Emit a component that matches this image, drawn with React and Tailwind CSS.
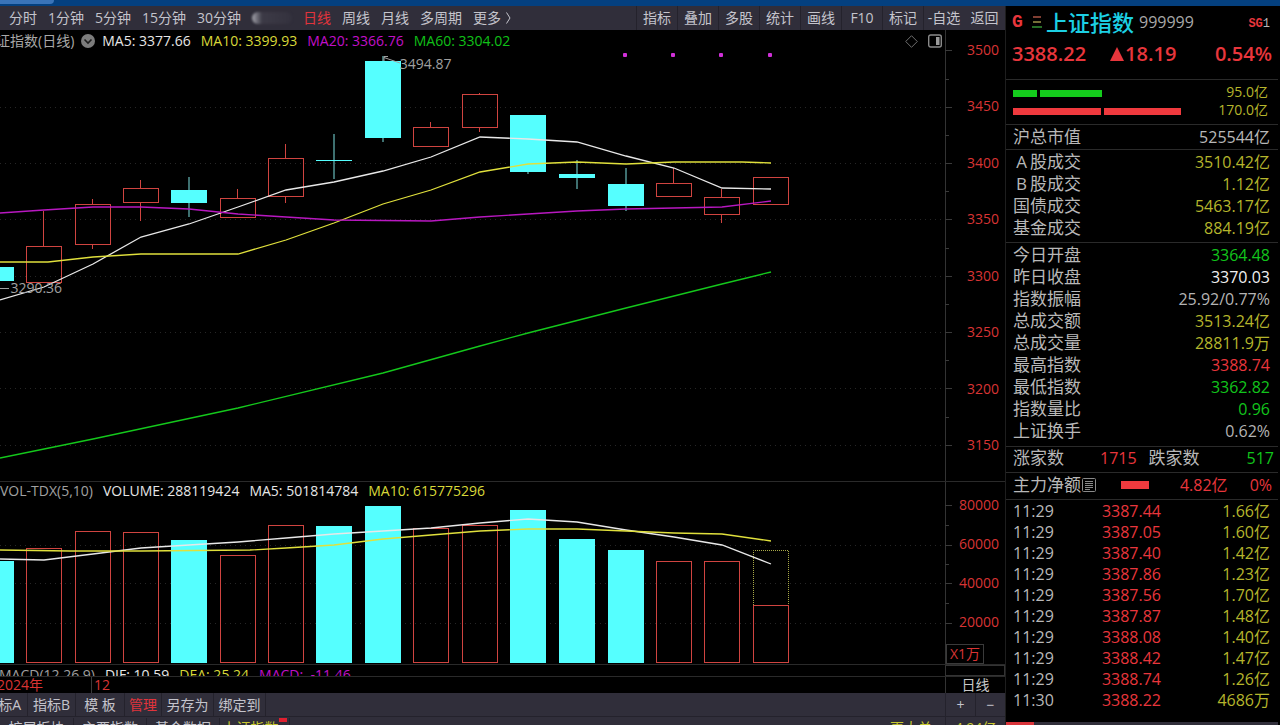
import React, { useState } from "react";
import clsx from "clsx";

const periods = ["分时", "1分钟", "5分钟", "15分钟", "30分钟"];
const longPeriods = ["日线", "周线", "月线", "多周期"];
const tools = ["指标", "叠加", "多股", "统计", "画线", "F10", "标记", "-自选", "返回"];

// x, kind, high, body top, body bottom, low, volume top
const candles = [
  [-5, "down", 267, 267, 281, 281, 561],
  [43, "up", 211, 246, 282, 282, 548],
  [92, "up", 199, 204, 244, 249, 531],
  [140, "up", 180, 188, 202, 221, 532],
  [188, "down", 177, 190, 203, 217, 540],
  [237, "up", 189, 198, 217, 217, 555],
  [285, "up", 144, 158, 196, 203, 525],
  [333, "down", 134, 160, 161, 179, 526],
  [382, "down", 56, 61, 138, 142, 506],
  [430, "up", 122, 127, 146, 146, 528],
  [479, "up", 93, 94, 127, 132, 525],
  [527, "down", 115, 115, 172, 174, 510],
  [576, "down", 160, 174, 178, 189, 539],
  [625, "down", 168, 184, 206, 211, 550],
  [673, "up", 168, 183, 196, 196, 561],
  [721, "up", 189, 197, 214, 223, 561],
  [770, "up", 177, 177, 204, 204, 605],
];

const priceLines = [
  ["#e8e8e8", "0,300 44,287 93,264 141,237 189,224 238,207 286,190 334,182 383,171 431,157 480,137 528,139 577,142 626,156 674,168 722,188 771,189"],
  ["#e0e03c", "0,262 48,262 93,257 141,254 238,254 286,240 334,223 383,204 431,190 480,172 528,164 577,162 626,164 674,162 742,162 771,163"],
  ["#b818c0", "0,213 44,210 93,207 141,207 189,209 238,214 286,217 334,220 431,221 480,217 528,214 577,211 626,209 674,208 722,207 771,201"],
  ["#14c81c", "0,458 93,439 238,408 383,373 480,346 528,333 626,308 674,296 722,284 771,272"],
];

const volumeLines = [
  ["#e8e8e8", "0,559 44,560 93,554 141,548 189,545 238,542 286,538 334,534 383,531 431,528 480,523 528,519 577,522 626,530 674,537 722,545 771,564"],
  ["#e0e03c", "0,550 70,551 141,551 250,550 286,548 334,545 383,539 431,535 480,531 528,529 577,529 626,531 674,533 722,534 771,541"],
];

const turnover = [
  ["A股成交", "3510.42亿"],
  ["B股成交", "1.12亿"],
  ["国债成交", "5463.17亿"],
  ["基金成交", "884.19亿"],
];

const stats = [
  ["今日开盘", "3364.48", "text-[#12c41c]"],
  ["昨日收盘", "3370.03", "text-[#f0f0f0]"],
  ["指数振幅", "25.92/0.77%", "text-[#b4b4b4]"],
  ["总成交额", "3513.24亿", "text-[#b5b52c]"],
  ["总成交量", "28811.9万", "text-[#b5b52c]"],
  ["最高指数", "3388.74", "text-[#e8363c]"],
  ["最低指数", "3362.82", "text-[#12c41c]"],
  ["指数量比", "0.96", "text-[#12c41c]"],
  ["上证换手", "0.62%", "text-[#b4b4b4]"],
];

const ticks = [
  ["11:29", "3387.44", "1.66亿"],
  ["11:29", "3387.05", "1.60亿"],
  ["11:29", "3387.40", "1.42亿"],
  ["11:29", "3387.86", "1.23亿"],
  ["11:29", "3387.56", "1.70亿"],
  ["11:29", "3387.87", "1.48亿"],
  ["11:29", "3388.08", "1.40亿"],
  ["11:29", "3388.42", "1.47亿"],
  ["11:29", "3388.74", "1.26亿"],
  ["11:30", "3388.22", "4686万"],
];

const Toolbar = () => {
  const [active, setActive] = useState("日线");

  return (
    <nav className="flex h-6 shrink-0 items-center justify-between bg-[#302e3a] text-[#c4c4cc]">
      <div className="flex items-center gap-[11px] pl-[9px]">
        {periods.map((p) => (
          <button key={p} type="button" onClick={() => setActive(p)} className="whitespace-nowrap">
            {p}
          </button>
        ))}
        <div className="h-3 w-10 rounded-full bg-linear-to-r from-[#a8a8b0] via-[#3c3a46] via-25% to-[#34323e] blur-[1px]" />
        {longPeriods.map((p) => (
          <button
            key={p}
            type="button"
            onClick={() => setActive(p)}
            className={clsx("whitespace-nowrap", p === active && "text-[#e0343c]")}
          >
            {p}
          </button>
        ))}
        <button type="button" className="flex items-center gap-1 whitespace-nowrap">
          更多
          <svg width="7" height="12" viewBox="0 0 7 12" fill="none" stroke="currentColor">
            <path d="M1.5 .5 5 6 1.5 11.5" />
          </svg>
        </button>
      </div>
      <div className="flex h-full">
        {tools.map((t, i) => (
          <button
            key={t}
            type="button"
            className={clsx("w-[41px] whitespace-nowrap text-center", i < 8 && "border-l border-[#24222c]")}
          >
            {t}
          </button>
        ))}
      </div>
    </nav>
  );
};

const Grid = ({ rows }) =>
  rows.map((y) => (
    <line key={y} x1="0" x2="945" y1={y + 0.5} y2={y + 0.5} stroke="#262626" strokeDasharray="1 4" />
  ));

const Ticks = ({ top, height, rows }) => (
  <svg className="h-full w-[7px] shrink-0" viewBox={`0 ${top} 7 ${height}`} preserveAspectRatio="none">
    <path d={`M.5 ${top}V${top + height}`} stroke="#333" />
    {rows.map((y, i) => (
      <path key={y} d={`M0 ${y + 0.5}H${i % 2 ? 4 : 7}`} stroke="#3a3a3a" />
    ))}
  </svg>
);

const PriceChart = () => (
  <section className="flex min-h-0 flex-1">
    <div className="flex min-w-0 flex-1 flex-col">
      <div className="flex h-5 shrink-0 items-center gap-[10px] overflow-hidden whitespace-nowrap pt-[2px]">
        <span className="-ml-[18px] text-[#a8a8a8]">上证指数(日线)</span>
        <svg className="-mx-[3px] shrink-0" width="14" height="14" viewBox="0 0 14 14">
          <circle cx="7" cy="7" r="7" fill="#7c7c7c" />
          <path d="m3.5 5.5 3.5 3.5 3.5-3.5" fill="none" stroke="#1c1c1c" strokeWidth="1.6" />
        </svg>
        <span className="text-[#e6e6e6]">MA5: 3377.66</span>
        <span className="text-[#d8d838]">MA10: 3399.93</span>
        <span className="text-[#c010c8]">MA20: 3366.76</span>
        <span className="text-[#10c018]">MA60: 3304.02</span>
        <svg className="ml-auto shrink-0" width="13" height="13" viewBox="0 0 13 13" fill="none" stroke="#6e6e6e">
          <path d="M6.5 .7 12.3 6.5 6.5 12.3 .7 6.5Z" />
        </svg>
        <svg className="mr-[3px] shrink-0" width="14" height="14" viewBox="0 0 14 14">
          <rect x=".7" y="1" width="12.6" height="12" rx="2" fill="none" stroke="#8a8a8a" strokeWidth="1.4" />
          <rect x="8" y="3" width="3.5" height="8" fill="#9a9a9a" />
        </svg>
      </div>
      <div className="relative min-h-0 flex-1">
        <svg className="absolute inset-0 h-full w-full" viewBox="0 50 945 431" preserveAspectRatio="none">
          <Grid rows={[107, 163, 219, 276, 332, 388, 445]} />
          <g fill="#d030d8">
            <rect x="623" y="53" width="4" height="4" rx="1" />
            <rect x="671" y="53" width="4" height="4" rx="1" />
            <rect x="719" y="53" width="4" height="4" rx="1" />
            <rect x="768" y="53" width="4" height="4" rx="1" />
          </g>
          {candles.map(([x, kind, high, top, bottom, low]) =>
            kind === "down" ? (
              <g key={x}>
                <path d={`M${x + 1} ${high}V${low}`} stroke="#7ce0e0" />
                <rect x={x - 17} y={top} width="36" height={bottom - top} fill="#55ffff" />
              </g>
            ) : (
              <g key={x} fill="none" stroke="#d04440">
                <path d={`M${x + 0.5} ${high}V${top}M${x + 0.5} ${bottom}V${low}`} />
                <rect x={x - 16.5} y={top + 0.5} width="35" height={bottom - top} />
              </g>
            )
          )}
          {priceLines.map(([color, points]) => (
            <polyline key={color} points={points} fill="none" stroke={color} strokeWidth="1.3" />
          ))}
          <path d="M388 56.500H384V61M384 57.500 400 63M0 288.500H9" fill="none" stroke="#a0a0a0" />
        </svg>
        <span className="absolute left-[42.300%] top-[1.400%] leading-4 text-[#a0a0a0]">3494.87</span>
        <span className="absolute left-[1.100%] top-[53.400%] leading-4 text-[#a0a0a0]">3290.36</span>
      </div>
    </div>
    <div className="flex w-[60px] shrink-0">
      <Ticks
        top={30}
        height={451}
        rows={[50, 79, 107, 135, 163, 191, 219, 248, 276, 304, 332, 360, 388, 417, 445]}
      />
      <div className="flex flex-1 flex-col items-end justify-between pb-7 pr-[6px] pt-3 leading-4 text-[#d83434]">
        {[3500, 3450, 3400, 3350, 3300, 3250, 3200, 3150].map((v) => (
          <span key={v}>{v}</span>
        ))}
      </div>
    </div>
  </section>
);

const VolumeChart = () => (
  <section className="flex h-[184px] shrink-0 border-y border-[#2a2a2a]">
    <div className="flex min-w-0 flex-1 flex-col">
      <div className="flex h-[18px] shrink-0 items-center gap-[10px] whitespace-nowrap">
        <span className="text-[#a0a0a0]">VOL-TDX(5,10)</span>
        <span className="text-[#e6e6e6]">VOLUME: 288119424</span>
        <span className="text-[#e6e6e6]">MA5: 501814784</span>
        <span className="text-[#d8d838]">MA10: 615775296</span>
      </div>
      <div className="relative min-h-0 flex-1">
        <svg className="absolute inset-0 h-full w-full" viewBox="0 500 945 164" preserveAspectRatio="none">
          <Grid rows={[545, 583, 623]} />
          {candles.map(([x, kind, , , , , top]) =>
            kind === "down" ? (
              <rect key={x} x={x - 17} y={top} width="36" height={663 - top} fill="#55ffff" />
            ) : (
              <rect
                key={x}
                x={x - 16.5}
                y={top + 0.5}
                width="35"
                height={662 - top}
                fill="none"
                stroke="#d04440"
              />
            )
          )}
          <path d="M753.500 605V550.500H788.500V605" fill="none" stroke="#a8a848" strokeDasharray="1 1" />
          {volumeLines.map(([color, points]) => (
            <polyline key={color} points={points} fill="none" stroke={color} strokeWidth="1.3" />
          ))}
        </svg>
      </div>
    </div>
    <div className="flex w-[60px] shrink-0">
      <Ticks top={482} height={182} rows={[505, 525, 545, 564, 583, 603, 623]} />
      <div className="flex flex-1 flex-col pt-[15px] leading-4 text-[#d83434]">
        <div className="flex flex-col gap-[23px] pr-[6px] text-right">
          {[80000, 60000, 40000, 20000].map((v) => (
            <span key={v}>{v}</span>
          ))}
        </div>
        <span className="-ml-[6px] mt-auto w-[38px] whitespace-nowrap border border-[#3a3a3a] text-center leading-[18px]">
          X1万
        </span>
      </div>
    </div>
  </section>
);

const BottomBars = () => (
  <footer className="shrink-0">
    <div className="flex h-[11px]">
      <div className="flex flex-1 items-start gap-[10px] overflow-hidden whitespace-nowrap pt-[2px]">
        <span className="-ml-px text-[#a0a0a0]">MACD(12,26,9)</span>
        <span className="text-[#e6e6e6]">DIF: 10.59</span>
        <span className="text-[#d8d838]">DEA: 25.24</span>
        <span className="whitespace-pre text-[#c010c8]">MACD:  -11.46</span>
      </div>
      <div className="w-[60px] border border-[#333]" />
    </div>
    <div className="flex h-[17px] border-t border-[#2a2a2a] leading-4">
      <div className="flex flex-1 text-[#d83434]">
        <span className="-ml-[3px] w-[94px]">2024年</span>
        <span className="border-l border-[#3a3a3a] pl-[2px]">12</span>
      </div>
      <span className="w-[60px] border-l border-[#333] text-center text-[#c8c8c8]">日线</span>
    </div>
    <div className="flex h-6 border-b border-[#24222c] bg-[#302e3a] text-[#c4c4cc]">
      <button type="button" className="flex w-[27px] items-center justify-end overflow-hidden whitespace-nowrap pr-[6px]">
        指标A
      </button>
      <button type="button" className="w-12 border-l border-[#24222c]">指标B</button>
      <button type="button" className="w-[50px] border-x border-[#24222c]">模 板</button>
      <button type="button" className="w-9 text-[#e0343c]">管理</button>
      <button type="button" className="w-[52px] border-l border-[#24222c]">另存为</button>
      <button type="button" className="w-[53px] border-x border-[#24222c]">绑定到</button>
      <button type="button" className="ml-auto w-[30px] border-l border-[#24222c]">+</button>
      <button type="button" className="w-[30px] border-l border-[#24222c]">−</button>
    </div>
    <div className="flex h-2 items-start overflow-hidden bg-[#302e3a] leading-5 text-[#c4c4cc]">
      <div className="flex flex-1 whitespace-nowrap pt-px">
        <a href="#sector" className="w-[74px] border-r border-[#24222c] text-center">扩展板块</a>
        <a href="#hk" className="w-[73px] border-r border-[#24222c] text-center">主要指数</a>
        <a href="#fund" className="w-[73px] border-r border-[#24222c] text-center">基金数据</a>
        <a href="#index" className="flex w-[70px] justify-center border-r border-[#24222c] text-[#c8c830]">
          上证指数
          <span className="h-1 w-2 bg-[#e02030]" />
        </a>
      </div>
      <span className="w-[55px] pt-px text-[#c8c830]">更大单</span>
      <span className="w-[60px] border-l border-[#24222c] pt-px text-center text-[#c8c830]">4.94亿</span>
    </div>
  </footer>
);

const Label = ({ text }) =>
  /^[AB]/.test(text) ? (
    <dt className="text-[17px] text-[#b8b8b8]">
      <span className="inline-block w-[17px] text-center">{text[0]}</span>
      {text.slice(1)}
    </dt>
  ) : (
    <dt className="text-[17px] text-[#b8b8b8]">{text}</dt>
  );

const QuotePanel = () => (
  <aside className="flex w-[275px] shrink-0 flex-col border-l border-[#1e1e1e] bg-black pr-[2px] text-base leading-[22px] text-[#b8b8b8]">
    <header className="h-[73px] px-[6px]">
      <div className="flex h-8 items-center pb-px">
        <b className="w-5 font-mono text-lg font-semibold text-[#e8363c]">G</b>
        <svg width="10" height="12" viewBox="0 0 10 12" strokeWidth="1.4">
          <path d="M1 1H9" stroke="#b85a48" />
          <path d="M1 6H9" stroke="#a8a050" />
          <path d="M0 11H10" stroke="#38a038" />
        </svg>
        <h1 className="ml-1 text-[22px] font-medium text-[#1cd0e4]">上证指数</h1>
        <span className="ml-[5px] text-[#a8a8a8]">999999</span>
        <span className="ml-auto mr-[2px] pt-1 font-mono text-xs">
          <b className="text-[#e8363c]">SG</b>1
        </span>
      </div>
      <div className="flex h-8 items-center text-xl font-semibold text-[#e8363c]">
        <span>3388.22</span>
        <span className="ml-6 flex items-center gap-px">
          <svg width="14" height="14" viewBox="0 0 14 14" fill="currentColor">
            <path d="M7 0 14 14H0Z" />
          </svg>
          18.19
        </span>
        <span className="ml-auto">0.54%</span>
      </div>
    </header>

    <section className="flex h-[45px] items-center justify-between border-t border-[#2a2a2a] pl-[7px] pr-[10px]">
      <div className="flex flex-col gap-[11px]">
        <div className="flex gap-[3px]">
          <div className="h-[7px] w-6 bg-[#14cc1c]" />
          <div className="h-[7px] w-[62px] bg-[#14cc1c]" />
        </div>
        <div className="flex gap-[3px]">
          <div className="h-[7px] w-[88px] bg-[#f03a3e]" />
          <div className="h-[7px] w-[77px] bg-[#f03a3e]" />
        </div>
      </div>
      <div className="flex flex-col pb-[2px] text-right text-sm leading-[18px] text-[#b5b52c]">
        <span>95.0亿</span>
        <span>170.0亿</span>
      </div>
    </section>

    <dl className="flex h-[25px] items-center justify-between border-t border-[#2a2a2a] pb-px pl-[7px] pr-2">
      <Label text="沪总市值" />
      <dd>525544亿</dd>
    </dl>

    <dl className="border-t border-[#2a2a2a] pb-[3px] pl-[7px] pr-2 pt-px">
      {turnover.map(([label, value]) => (
        <div key={label} className="flex h-[22px] items-center justify-between">
          <Label text={label} />
          <dd className="text-[#b5b52c]">{value}</dd>
        </div>
      ))}
    </dl>

    <dl className="border-t border-[#2a2a2a] pb-1 pl-[7px] pr-2 pt-px">
      {stats.map(([label, value, color]) => (
        <div key={label} className="flex h-[22px] items-center justify-between">
          <Label text={label} />
          <dd className={color}>{value}</dd>
        </div>
      ))}
    </dl>

    <dl className="flex h-[26px] items-center border-t border-[#2a2a2a] pb-[3px] pl-[7px] pr-1">
      <Label text="涨家数" />
      <dd className="ml-9 text-[#e8363c]">1715</dd>
      <dt className="ml-3 text-[17px]">跌家数</dt>
      <dd className="ml-auto text-[#12c41c]">517</dd>
    </dl>

    <div className="flex h-[27px] items-center border-t border-[#2a2a2a] pb-[2px] pl-[7px] pr-[6px] text-[#e8363c]">
      <span className="text-[17px] text-[#b8b8b8]">主力净额</span>
      <svg className="ml-px" width="14" height="14" viewBox="0 0 14 14" fill="none" stroke="#8a8a8a">
        <rect x=".5" y=".5" width="13" height="13" rx="1" />
        <path d="M3 3.500H11M3 5.500H11M3 7.500H11M3 9.500H11M3 11.500H8" />
      </svg>
      <div className="ml-[25px] h-2 w-7 bg-[#f03a3e]" />
      <span className="ml-auto">4.82亿</span>
      <span className="ml-[22px]">0%</span>
    </div>

    <div className="flex-1 border-t border-[#2a2a2a] pl-[7px] pr-2 pt-px">
      <table className="w-full table-fixed leading-[21px]">
        <tbody>
          {ticks.map(([time, price, amount]) => (
            <tr key={price}>
              <td className="w-[70px] p-0">{time}</td>
              <td className="w-[78px] p-0 text-right text-[#e8363c]">{price}</td>
              <td className="p-0 text-right text-[#b5b52c]">{amount}</td>
            </tr>
          ))}
        </tbody>
      </table>
    </div>
    <div className="h-[3px] bg-[#302e3a]">
      <div className="h-full w-7 bg-[#d8343a]" />
    </div>
  </aside>
);

const App = () => (
  <div className="flex h-screen flex-col overflow-hidden bg-black font-['Open_Sans','Noto_Sans_CJK_SC',sans-serif] text-sm leading-4">
    <div className="h-[6px] shrink-0 bg-[#04407f]">
      <div className="h-1 w-[54px] rounded-br bg-[#3a74b8]" />
    </div>
    <div className="flex min-h-0 flex-1">
      <main className="flex min-w-0 flex-1 flex-col">
        <Toolbar />
        <PriceChart />
        <VolumeChart />
        <BottomBars />
      </main>
      <QuotePanel />
    </div>
  </div>
);

export default App;
